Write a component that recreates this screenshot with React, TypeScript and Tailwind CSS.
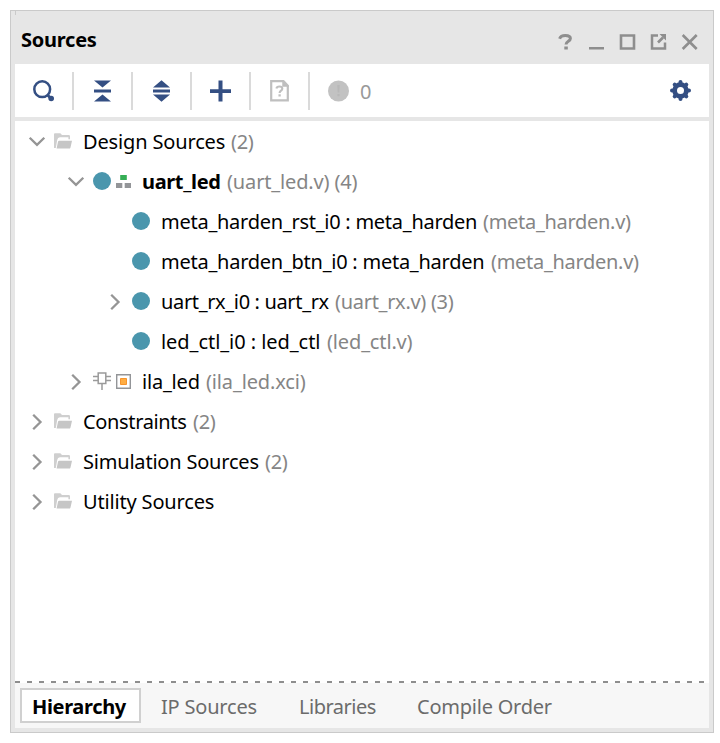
import React from "react";

const Separator = () => <div className="h-[38px] w-0.5 shrink-0 bg-[#dadada]" />;

const Chevron = ({ open }: { open?: boolean }) => (
  <svg className="h-5 w-5 shrink-0" viewBox="0 0 20 20" fill="none" stroke="#959595" strokeWidth="2.3">
    <path d={open ? "M2.7 6.7 10 13.8l7.3-7.1" : "M6.2 3.7 13.5 11l-7.3 7.3"} />
  </svg>
);

const Folder = () => (
  <svg className="h-4 w-[18px] shrink-0" viewBox="0 0 18 16">
    <path d="M0 15V1.3Q0 .3 1 .3H6.3L8 2H14.7Q16 2 16 3.3V6.3H14.4V4.2H6Q3.6 4.4 3.2 7L1.8 15Z" fill="#cfcfcf" />
    <path d="M5.2 7.8H18l-1.5 6.6q-.3 1.2-1.4 1.2H2.6L4 8.8q.2-1 1.2-1Z" fill="#c6c6c6" />
  </svg>
);

const Dot = () => <div className="h-[18px] w-[18px] shrink-0 rounded-full bg-[#4a96ad]" />;

const ModuleIcon = () => (
  <svg className="ml-[5px] h-[18px] w-[15px] shrink-0" viewBox="0 0 15 18">
    <path d="M4.2 3h6.6v5H4.2Z" fill="#35ae55" />
    <path d="M0 11h6.3v5H0ZM8.7 11H15v5H8.7Z" fill="#939598" />
  </svg>
);

const IpIcon = () => (
  <>
    <svg className="h-[18px] w-[18px] shrink-0" viewBox="0 0 18 18" fill="none" stroke="#9a9a9a" strokeWidth="1.5">
      <path d="M5.2 1h7.6v10.4H5.2ZM0 4.5h5M0 8.5h5M13 4.5h5M13 8.5h5M9 11.5V18" />
    </svg>
    <svg className="ml-[5px] h-[15px] w-[15px] shrink-0" viewBox="0 0 15 15">
      <path d="M.7.7h13.6v13.6H.7Z" fill="#fff" stroke="#939598" strokeWidth="1.4" />
      <path d="M4.5 4.5h6v6h-6Z" fill="#ffad42" stroke="#f7942c" />
    </svg>
  </>
);

interface RowProps {
  indent: string;
  state?: "open" | "closed";
  icon: React.ReactNode;
  label: string;
  labelClass: string;
  note?: string;
  noteClass?: string;
}

const Row = ({ indent, state, icon, label, labelClass, note, noteClass = "tracking-[-0.3px]" }: RowProps) => (
  <div className={`flex h-10 items-center whitespace-pre ${indent}`}>
    <div className="mr-[7px] w-5 shrink-0">{state && <Chevron open={state === "open"} />}</div>
    {icon}
    <span className={`ml-[11px] mt-0.5 shrink-0 text-black ${labelClass}`}>{label}</span>
    {note && <span className={`mt-0.5 text-[#858585] ${noteClass}`}>{note}</span>}
  </div>
);

export default function App() {
  return (
    <div className="h-[743px] w-[720px] bg-white pl-2.5 pt-2.5 font-['Noto_Sans','Open_Sans',sans-serif] text-[20px] leading-[28px]">
      <div className="flex h-[723px] w-[704px] flex-col border border-[#cacaca] bg-[#e6e6e6] px-1 pb-1">
        <div className="flex h-[53px] shrink-0 items-center">
          <div className="h-1 w-px self-start bg-[#cacaca]" />
          <h1 className="ml-[5px] mt-[5px] w-[77px] text-[20px] font-bold tracking-[-0.25px] text-black">Sources</h1>
          <svg className="ml-auto mr-[11px] mt-[9px] h-4 w-[140px]" viewBox="0 0 140 16" fill="none" stroke="#8e8e8e" strokeWidth="2">
            <path d="M1.6 4.8Q2.6 1.5 7.4 1.5q5 0 5 3.1c0 2.8-4.4 2.6-4.4 6" strokeWidth="3" />
            <path d="M6.3 12.6h3.5v3H6.3ZM31 13h15v2.5H31Z" fill="#8e8e8e" stroke="none" />
            <path d="M63 1.5h13v13H63Z" strokeWidth="2.6" />
            <path d="M100 1.5H94v13h13V8.5" strokeWidth="2.5" />
            <path d="m100 8.5 5-5" strokeWidth="2.6" />
            <path d="M101.5 0h6.5v6.5Z" fill="#8e8e8e" stroke="none" />
            <path d="m124.7 1 14 14M138.7 1l-14 14" strokeWidth="2.6" />
          </svg>
        </div>

        <div className="flex h-[53px] shrink-0 items-center bg-white">
          <svg className="ml-[18px] h-[22px] w-[22px]" viewBox="0 0 22 22" fill="none" stroke="#344f83">
            <circle cx="9.2" cy="9.2" r="7.9" strokeWidth="2.5" />
            <path d="m14.5 15 3 3" strokeWidth="2.8" />
            <circle cx="18.2" cy="18.5" r="2.8" fill="#344f83" stroke="none" />
          </svg>
          <div className="ml-[17px]"><Separator /></div>
          <svg className="mx-5 h-[22px] w-[17px]" viewBox="0 0 17 22" fill="#344f83">
            <path d="M0 .5h17L8.5 7.5ZM0 9.5h17v3H0ZM0 21.5h17l-8.5-7Z" />
          </svg>
          <Separator />
          <svg className="mx-5 h-[22px] w-[17px]" viewBox="0 0 17 22" fill="#344f83">
            <path d="M0 7.5 8.5.3 17 7.5ZM0 9.5h17v3H0ZM0 14.5h17L8.5 21.7Z" />
          </svg>
          <Separator />
          <svg className="mx-[18px] h-[22px] w-[21px]" viewBox="0 0 21 22" fill="#344f83">
            <path d="M8.5.5h4v8.7H21v3.9h-8.5v8.4h-4v-8.4H0V9.2h8.5Z" />
          </svg>
          <Separator />
          <svg className="ml-[19px] h-[22px] w-[19px]" viewBox="0 0 19 22" fill="none" stroke="#bfbfbf">
            <path d="M1.2 1.2h12.3l4.3 4.5v14.6H1.2Z" strokeWidth="2.2" />
            <path d="M13 1v5h5Z" strokeWidth="1.5" fill="#bfbfbf" />
            <path d="M6.4 8.5Q6.7 6.5 9.5 6.5q2.8 0 2.8 2.2c0 2-2.7 2-2.7 4.3" strokeWidth="2.1" />
            <path d="M9.6 14.3v2.2" strokeWidth="2.3" />
          </svg>
          <div className="ml-[19px]"><Separator /></div>
          <svg className="ml-[18px] h-[22px] w-[21px]" viewBox="0 0 21 22">
            <circle cx="10.5" cy="11" r="10.5" fill="#c2c2c2" />
            <path d="M9.3 5h2.4l-.4 7.5H9.7ZM9.4 14h2.2v2.3H9.4Z" fill="#b8b8b8" />
          </svg>
          <span className="ml-[11px] mt-0.5 text-[#999]">0</span>
          <svg className="ml-auto mr-[18px] h-[22px] w-[21px]" viewBox="0 0 21 22">
            <circle cx="10.5" cy="10.5" r="5.8" fill="none" stroke="#344f83" strokeWidth="4.8" />
            <path
              d="M10.5 2v17M2 10.5h17M4.7 4.7l11.6 11.6M16.3 4.7 4.7 16.3"
              stroke="#344f83"
              strokeWidth="4"
              strokeLinecap="round"
              fill="none"
            />
            <circle cx="10.5" cy="10.5" r="3.5" fill="#fff" />
          </svg>
        </div>

        <div className="mt-1 h-[560px] shrink-0 bg-white">
          <Row indent="pl-3" state="open" icon={<Folder />} label="Design Sources" labelClass="w-[148px] tracking-[-0.15px]" note="(2)" />
          <Row indent="pl-[51px]" state="open" icon={<><Dot /><ModuleIcon /></>} label="uart_led" labelClass="w-[85px] font-bold tracking-[-0.35px]" note="(uart_led.v) (4)" noteClass="tracking-[-0.15px]" />
          <Row indent="pl-[90px]" icon={<Dot />} label="meta_harden_rst_i0 : meta_harden" labelClass="w-[322px] tracking-[-0.26px]" note="(meta_harden.v)" />
          <Row indent="pl-[90px]" icon={<Dot />} label="meta_harden_btn_i0 : meta_harden" labelClass="w-[330px] tracking-[-0.25px]" note="(meta_harden.v)" />
          <Row indent="pl-[90px]" state="closed" icon={<Dot />} label="uart_rx_i0 : uart_rx" labelClass="w-[174px] tracking-[-0.35px]" note="(uart_rx.v) (3)" />
          <Row indent="pl-[90px]" icon={<Dot />} label="led_ctl_i0 : led_ctl" labelClass="w-[166px] tracking-[-0.05px]" note="(led_ctl.v)" noteClass="tracking-[-0.15px]" />
          <Row indent="pl-[51px]" state="closed" icon={<IpIcon />} label="ila_led" labelClass="w-[64px] tracking-[-0.2px]" note="(ila_led.xci)" noteClass="tracking-[-0.15px]" />
          <Row indent="pl-3" state="closed" icon={<Folder />} label="Constraints" labelClass="w-[110px] tracking-[-0.35px]" note="(2)" />
          <Row indent="pl-3" state="closed" icon={<Folder />} label="Simulation Sources" labelClass="w-[182px] tracking-[-0.2px]" note="(2)" />
          <Row indent="pl-3" state="closed" icon={<Folder />} label="Utility Sources" labelClass="tracking-[-0.17px]" />
        </div>

        <div className="h-0.5 shrink-0 bg-white bg-[repeating-linear-gradient(90deg,#8e8e8e_0px,#8e8e8e_5px,transparent_5px,transparent_12px)]" />
        <div className="flex h-[45px] shrink-0 items-start whitespace-nowrap bg-[#f7f7f7] pl-[5px] pt-[5px] text-[#6b6b6b]">
          <div className="flex h-[35px] w-[121px] items-center border-2 border-[#d0d0d0] bg-white pl-2.5 pt-0.5 font-bold tracking-[-0.35px] text-black">Hierarchy</div>
          <span className="ml-5 mt-[5px] w-[138px] tracking-[-0.2px]">IP Sources</span>
          <span className="mt-[5px] w-[118px] tracking-[-0.5px]">Libraries</span>
          <span className="mt-[5px] tracking-[-0.23px]">Compile Order</span>
        </div>
      </div>
    </div>
  );
}
